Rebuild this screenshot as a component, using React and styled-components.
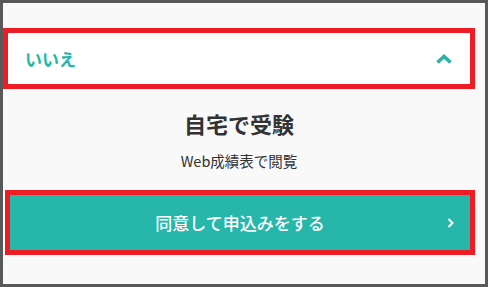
import React from "react";
import styled, { createGlobalStyle } from "styled-components";

const GlobalStyle = createGlobalStyle`
  html, body {
    margin: 0;
    padding: 0;
    background: #f9f9f9;
  }
  * {
    box-sizing: border-box;
  }
`;

const Frame = styled.div`
  width: 488px;
  height: 287px;
  border: 3px solid #595959;
  background: #f9f9f9;
  padding: 25px 10px 0 0;
  font-family: "Noto Sans CJK JP", "Noto Sans", sans-serif;
  color: #333;
  display: flex;
  flex-direction: column;
`;

const AccordionHead = styled.div`
  height: 61px;
  border: 5px solid #ee1c25;
  background: #fff;
  display: flex;
  align-items: center;
  justify-content: space-between;
  padding: 0 17px 0 17px;
`;

const HeadLabel = styled.span`
  font-size: 17px;
  font-weight: 700;
  color: #26b5a7;
  line-height: 1;
`;

const Body = styled.div`
  display: flex;
  flex-direction: column;
  align-items: center;
  padding-top: 18px;
`;

const Title = styled.h2`
  margin: 0;
  font-size: 22px;
  line-height: 32px;
  font-weight: 700;
  color: #333;
`;

const Sub = styled.p`
  margin: 12px 0 0;
  font-size: 14.5px;
  line-height: 20px;
  color: #333;
`;

const ButtonWrap = styled.div`
  margin: 19px 0 0 2px;
  height: 65px;
  border: 5px solid #ee1c25;
`;

const ApplyButton = styled.button`
  width: 100%;
  height: 100%;
  border: 0;
  margin: 0;
  background: #26b7aa;
  color: #fff;
  font-family: inherit;
  font-size: 17px;
  font-weight: 500;
  position: relative;
  display: flex;
  align-items: center;
  justify-content: center;
  cursor: pointer;
`;

const Arrow = styled.svg`
  position: absolute;
  right: 15px;
  top: 50%;
  transform: translateY(-50%);
`;

function ChevronUp() {
  return (
    <svg width="18" height="12" viewBox="0 0 18 12">
      <polyline
        points="2.5,9.5 9,3.5 15.5,9.5"
        fill="none"
        stroke="#26b5a7"
        strokeWidth="3.6"
        strokeLinejoin="miter"
      />
    </svg>
  );
}

export default function App() {
  return (
    <>
      <GlobalStyle />
      <Frame>
        <AccordionHead>
          <HeadLabel>いいえ</HeadLabel>
          <ChevronUp />
        </AccordionHead>
        <Body>
          <Title>自宅で受験</Title>
          <Sub>Web成績表で閲覧</Sub>
        </Body>
        <ButtonWrap>
          <ApplyButton>
            同意して申込みをする
            <Arrow width="8" height="11" viewBox="0 0 8 11">
              <polyline
                points="1.5,1.5 5.5,5.5 1.5,9.5"
                fill="none"
                stroke="#fff"
                strokeWidth="2"
              />
            </Arrow>
          </ApplyButton>
        </ButtonWrap>
      </Frame>
    </>
  );
}
